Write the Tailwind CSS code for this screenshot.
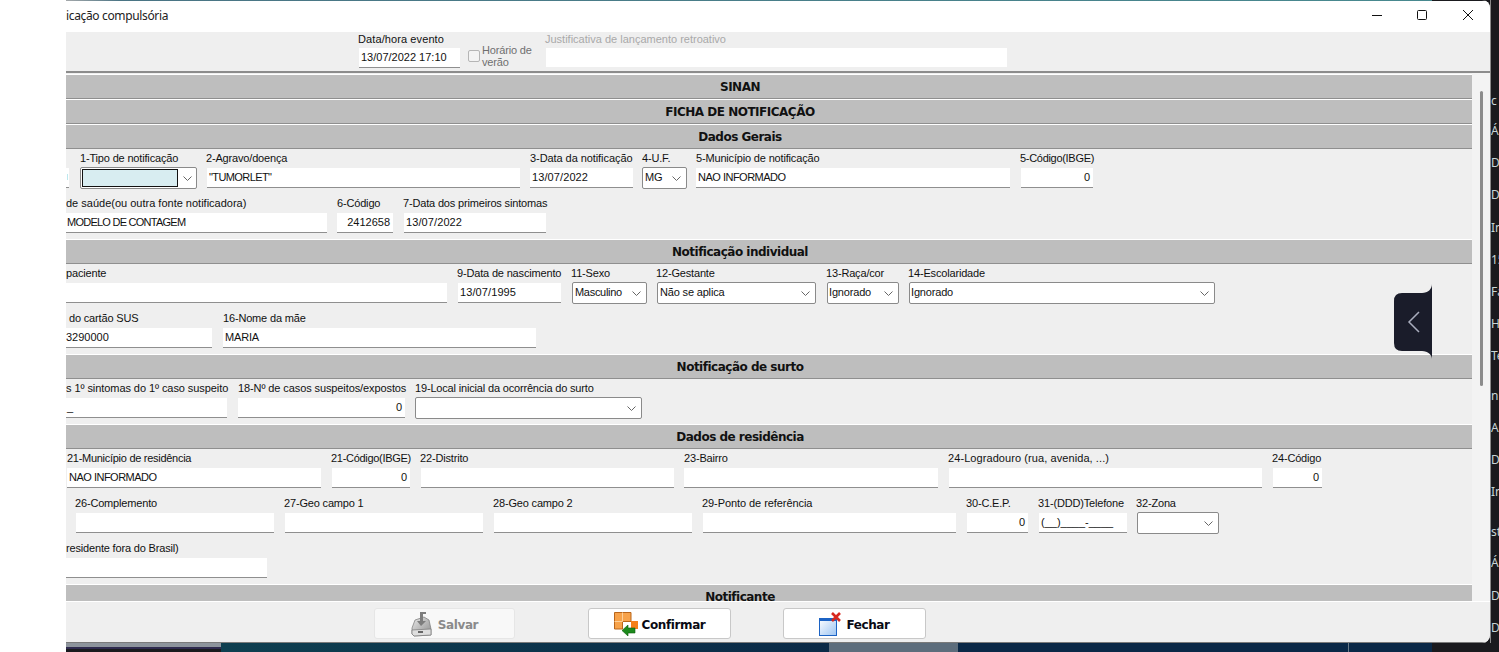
<!DOCTYPE html>
<html lang="pt-BR">
<head>
  <meta charset="UTF-8" />
  <title>Notificação compulsória</title>
  <script src="https://cdn.jsdelivr.net/npm/@tailwindcss/browser@4"></script>
</head>
<body class="bg-white overflow-hidden">

<div class="relative flex w-[1499px] h-[652px] overflow-hidden font-['Liberation_Sans',sans-serif] text-[11px] tracking-[-0.17px] text-[#111]">
  <div class="w-[66px] shrink-0 bg-white"></div>

  <div class="flex-1 flex flex-col bg-[#1a1a1e]">
    <div class="flex h-[643px]">

      <!-- Window -->
      <div class="w-[1424px] h-[643px] flex flex-col bg-[#efefef] rounded-r-[8px] overflow-hidden">
        <!-- Title bar -->
        <div class="h-[1px] flex">
          <div class="w-[1366px] bg-gradient-to-r from-[#a5a9ab] via-[#4a7484] via-[4%] to-[#47898f]"></div>
          <div class="flex-1 bg-[#1a1a1e]"></div>
        </div>
        <div class="h-[31px] bg-white flex items-center justify-between">
          <span class="text-[12px] -mt-[2px] tracking-[-0.35px] font-['Noto_Sans',sans-serif] text-[#222]">icação compulsória</span>
          <div class="flex items-center -mt-[4px] mr-[17px]">
            <svg class="w-[10px] h-[10px]" viewBox="0 0 10 10"><path d="M0 5.5H10" stroke="#111" stroke-width="1"/></svg>
            <svg class="w-[10px] h-[10px] ml-[35px]" viewBox="0 0 10 10"><rect x=".5" y=".5" width="9" height="9" rx="1" fill="none" stroke="#111"/></svg>
            <svg class="w-[10px] h-[10px] ml-[36px]" viewBox="0 0 10 10"><path d="M0 0L10 10M10 0L0 10" stroke="#111" stroke-width="1"/></svg>
          </div>
        </div>

        <!-- Event date panel -->
        <div class="h-[41px] shrink-0 bg-[#efefef] border-b-2 border-b-[#8c8c8c] flex">
          <div class="ml-[292px] w-[102px]">
            <div class="h-[14px] leading-[14px] whitespace-nowrap tracking-[0.1px]">Data/hora evento</div>
            <div class="ml-[1px] mt-[2px] h-[20px] w-[101px] bg-white border-b border-b-[#8f8f8f] pl-[2px] leading-[19px] tracking-[0px]">13/07/2022 17:10</div>
          </div>
          <div class="ml-[8px] mt-[18px] w-[12px] h-[12px] border border-[#b5b5b5] rounded-[2px] bg-[#f3f3f3]"></div>
          <div class="ml-[2px] mt-[12px] w-[58px] leading-[12px] text-[#6f6f6f]">Horário de verão</div>
          <div class="ml-[5px] w-[461px]">
            <div class="h-[14px] leading-[14px] whitespace-nowrap text-[#a9a9a9] tracking-[0px]">Justificativa de lançamento retroativo</div>
            <div class="ml-[1px] mt-[2px] h-[19px] w-[461px] bg-white"></div>
          </div>
        </div>

        <!-- Form body -->
        <div class="flex h-[528px] shrink-0 overflow-hidden">
          <div class="w-[1406px] shrink-0 pt-[1px] overflow-hidden bg-[#efefef]">

            <div class="h-[25px] bg-[#bebebe] border-t border-t-white border-b border-b-[#8f8f8f] -ml-[58px] text-center font-bold text-[12px] leading-[25px] font-['DejaVu_Sans',sans-serif] tracking-[-0.5px]">SINAN</div>
            <div class="h-[25px] bg-[#bebebe] border-t border-t-white border-b border-b-[#8f8f8f] -ml-[58px] text-center font-bold text-[12px] leading-[25px] font-['DejaVu_Sans',sans-serif] tracking-[-0.5px]">FICHA DE NOTIFICAÇÃO</div>
            <div class="h-[25px] bg-[#bebebe] border-t border-t-white border-b border-b-[#8f8f8f] -ml-[58px] text-center font-bold text-[12px] leading-[25px] font-['DejaVu_Sans',sans-serif] tracking-[-0.5px]">Dados Gerais</div>

            <div class="pt-[2px] flex flex-col gap-[8px]">
              <div class="flex h-[37px]">
                <div class="w-[3px] mt-[17px] h-[20px] bg-white border-b border-b-[#8f8f8f] pt-[6px]"><div class="ml-[1px] w-[1px] h-[6px] bg-[#bde8ee]"></div></div>
                <div class="ml-[11px] w-[117px]">
                  <div class="h-[14px] leading-[14px] whitespace-nowrap">1-Tipo de notificação</div>
                  <div class="mt-[2px] h-[22px] bg-white border border-[#8a8a8a] rounded-[2px] flex items-center p-[1px]">
                    <div class="w-[96px] h-[18px] bg-[#d8edf1] border border-[#111]"></div>
                    <svg class="ml-[5px] w-[9px] h-[5px]" viewBox="0 0 9 5"><path d="M.5 .5L4.5 4.5L8.5 .5" fill="none" stroke="#666"/></svg>
                  </div>
                </div>
                <div class="ml-[10px] w-[313px]">
                  <div class="-ml-px h-[14px] leading-[14px] whitespace-nowrap">2-Agravo/doença</div>
                  <div class="mt-[3px] h-[20px] bg-white border-b border-b-[#8f8f8f] pl-[2px] leading-[19px] whitespace-nowrap tracking-[-0.6px]">"TUMORLET"</div>
                </div>
                <div class="ml-[10px] w-[103px]">
                  <div class="h-[14px] leading-[14px] whitespace-nowrap tracking-[-0.07px]">3-Data da notificação</div>
                  <div class="mt-[3px] h-[20px] bg-white border-b border-b-[#8f8f8f] pl-[2px] leading-[19px] whitespace-nowrap tracking-[0.1px]">13/07/2022</div>
                </div>
                <div class="ml-[9px] w-[45px]">
                  <div class="h-[14px] leading-[14px] whitespace-nowrap">4-U.F.</div>
                  <div class="mt-[2px] h-[22px] bg-white border border-[#8a8a8a] rounded-[2px] flex items-center justify-between pl-[2px] pr-[5px]"><span class="-mt-[2px]">MG</span><svg class="w-[9px] h-[5px]" viewBox="0 0 9 5"><path d="M.5 .5L4.5 4.5L8.5 .5" fill="none" stroke="#666"/></svg></div>
                </div>
                <div class="ml-[9px] w-[314px]">
                  <div class="h-[14px] leading-[14px] whitespace-nowrap">5-Município de notificação</div>
                  <div class="mt-[3px] h-[20px] bg-white border-b border-b-[#8f8f8f] pl-[2px] leading-[19px] whitespace-nowrap tracking-[-0.5px]">NAO INFORMADO</div>
                </div>
                <div class="ml-[11px] w-[72px]">
                  <div class="-ml-px h-[14px] leading-[14px] whitespace-nowrap tracking-[-0.3px]">5-Código(IBGE)</div>
                  <div class="mt-[3px] h-[20px] bg-white border-b border-b-[#8f8f8f] pr-[3px] text-right leading-[19px]">0</div>
                </div>
              </div>

              <div class="flex h-[37px]">
                <div class="w-[261px]">
                  <div class="h-[14px] leading-[14px] whitespace-nowrap tracking-[0px]">de saúde(ou outra fonte notificadora)</div>
                  <div class="mt-[3px] h-[20px] bg-white border-b border-b-[#8f8f8f] pl-[1px] leading-[19px] whitespace-nowrap tracking-[-0.75px]">MODELO DE CONTAGEM</div>
                </div>
                <div class="ml-[10px] w-[56px]">
                  <div class="h-[14px] leading-[14px] whitespace-nowrap">6-Código</div>
                  <div class="mt-[3px] h-[20px] bg-white border-b border-b-[#8f8f8f] pr-[3px] text-right leading-[19px] tracking-[0px]">2412658</div>
                </div>
                <div class="ml-[11px] w-[142px]">
                  <div class="-ml-px h-[14px] leading-[14px] whitespace-nowrap">7-Data dos primeiros sintomas</div>
                  <div class="mt-[3px] h-[20px] bg-white border-b border-b-[#8f8f8f] pl-[2px] leading-[19px] tracking-[0.1px]">13/07/2022</div>
                </div>
              </div>
            </div>

            <div class="mt-[6px] h-[25px] bg-[#bebebe] border-t border-t-white border-b border-b-[#8f8f8f] -ml-[58px] text-center font-bold text-[12px] leading-[25px] font-['DejaVu_Sans',sans-serif] tracking-[-0.5px]">Notificação individual</div>

            <div class="pt-[2px] flex flex-col gap-[8px]">
              <div class="flex h-[37px]">
                <div class="w-[381px]">
                  <div class="h-[14px] leading-[14px] whitespace-nowrap">paciente</div>
                  <div class="mt-[3px] h-[20px] bg-white border-b border-b-[#8f8f8f]"></div>
                </div>
                <div class="ml-[11px] w-[103px]">
                  <div class="-ml-px h-[14px] leading-[14px] whitespace-nowrap">9-Data de nascimento</div>
                  <div class="mt-[3px] h-[20px] bg-white border-b border-b-[#8f8f8f] pl-[2px] leading-[19px] tracking-[0.1px]">13/07/1995</div>
                </div>
                <div class="ml-[11px] w-[75px]">
                  <div class="-ml-px h-[14px] leading-[14px] whitespace-nowrap">11-Sexo</div>
                  <div class="mt-[2px] h-[22px] bg-white border border-[#8a8a8a] rounded-[2px] flex items-center justify-between pl-[2px] pr-[5px]"><span class="-mt-[2px] tracking-[-0.3px]">Masculino</span><svg class="w-[9px] h-[5px]" viewBox="0 0 9 5"><path d="M.5 .5L4.5 4.5L8.5 .5" fill="none" stroke="#666"/></svg></div>
                </div>
                <div class="ml-[10px] w-[159px]">
                  <div class="-ml-px h-[14px] leading-[14px] whitespace-nowrap">12-Gestante</div>
                  <div class="mt-[2px] h-[22px] bg-white border border-[#8a8a8a] rounded-[2px] flex items-center justify-between pl-[2px] pr-[5px]"><span class="-mt-[2px]">Não se aplica</span><svg class="w-[9px] h-[5px]" viewBox="0 0 9 5"><path d="M.5 .5L4.5 4.5L8.5 .5" fill="none" stroke="#666"/></svg></div>
                </div>
                <div class="ml-[11px] w-[72px]">
                  <div class="-ml-px h-[14px] leading-[14px] whitespace-nowrap">13-Raça/cor</div>
                  <div class="mt-[2px] h-[22px] bg-white border border-[#8a8a8a] rounded-[2px] flex items-center justify-between pl-[1px] pr-[5px]"><span class="-mt-[2px]">Ignorado</span><svg class="w-[9px] h-[5px]" viewBox="0 0 9 5"><path d="M.5 .5L4.5 4.5L8.5 .5" fill="none" stroke="#666"/></svg></div>
                </div>
                <div class="ml-[10px] w-[306px]">
                  <div class="-ml-px h-[14px] leading-[14px] whitespace-nowrap">14-Escolaridade</div>
                  <div class="mt-[2px] h-[22px] bg-white border border-[#8a8a8a] rounded-[2px] flex items-center justify-between pl-[1px] pr-[5px]"><span class="-mt-[2px]">Ignorado</span><svg class="w-[9px] h-[5px]" viewBox="0 0 9 5"><path d="M.5 .5L4.5 4.5L8.5 .5" fill="none" stroke="#666"/></svg></div>
                </div>
              </div>

              <div class="flex h-[37px]">
                <div class="w-[146px]">
                  <div class="pl-[3px] h-[14px] leading-[14px] whitespace-nowrap">do cartão SUS</div>
                  <div class="mt-[3px] h-[20px] bg-white border-b border-b-[#8f8f8f] leading-[19px] tracking-[0px]">3290000</div>
                </div>
                <div class="ml-[11px] w-[313px]">
                  <div class="h-[14px] leading-[14px] whitespace-nowrap">16-Nome da mãe</div>
                  <div class="mt-[3px] h-[20px] bg-white border-b border-b-[#8f8f8f] pl-[2px] leading-[19px]">MARIA</div>
                </div>
              </div>
            </div>

            <div class="mt-[6px] h-[25px] bg-[#bebebe] border-t border-t-white border-b border-b-[#8f8f8f] -ml-[58px] text-center font-bold text-[12px] leading-[25px] font-['DejaVu_Sans',sans-serif] tracking-[-0.5px]">Notificação de surto</div>

            <div class="pt-[2px]">
              <div class="flex h-[37px]">
                <div class="w-[161px]">
                  <div class="h-[14px] leading-[14px] whitespace-nowrap tracking-[-0.07px]">s 1º sintomas do 1º caso suspeito</div>
                  <div class="mt-[3px] h-[20px] bg-white border-b border-b-[#8f8f8f] pl-[1px] leading-[19px]">_</div>
                </div>
                <div class="ml-[11px] w-[167px]">
                  <div class="h-[14px] leading-[14px] whitespace-nowrap tracking-[-0.1px]">18-Nº de casos suspeitos/expostos</div>
                  <div class="mt-[3px] h-[20px] bg-white border-b border-b-[#8f8f8f] pr-[3px] text-right leading-[19px]">0</div>
                </div>
                <div class="ml-[10px] w-[227px]">
                  <div class="h-[14px] leading-[14px] whitespace-nowrap">19-Local inicial da ocorrência do surto</div>
                  <div class="mt-[2px] h-[22px] bg-white border border-[#8a8a8a] rounded-[2px] flex items-center justify-end pr-[5px]"><svg class="w-[9px] h-[5px]" viewBox="0 0 9 5"><path d="M.5 .5L4.5 4.5L8.5 .5" fill="none" stroke="#666"/></svg></div>
                </div>
              </div>
            </div>

            <div class="mt-[6px] h-[25px] bg-[#bebebe] border-t border-t-white border-b border-b-[#8f8f8f] -ml-[58px] text-center font-bold text-[12px] leading-[25px] font-['DejaVu_Sans',sans-serif] tracking-[-0.5px]">Dados de residência</div>

            <div class="pt-[2px] flex flex-col gap-[8px]">
              <div class="flex h-[37px]">
                <div class="ml-[1px] w-[254px]">
                  <div class="h-[14px] leading-[14px] whitespace-nowrap tracking-[-0.28px]">21-Município de residência</div>
                  <div class="mt-[3px] h-[20px] bg-white border-b border-b-[#8f8f8f] pl-[2px] leading-[19px] tracking-[-0.5px]">NAO INFORMADO</div>
                </div>
                <div class="ml-[11px] w-[78px]">
                  <div class="-ml-px h-[14px] leading-[14px] whitespace-nowrap tracking-[-0.3px]">21-Código(IBGE)</div>
                  <div class="mt-[3px] h-[20px] bg-white border-b border-b-[#8f8f8f] pr-[3px] text-right leading-[19px]">0</div>
                </div>
                <div class="ml-[11px] w-[253px]">
                  <div class="-ml-px h-[14px] leading-[14px] whitespace-nowrap">22-Distrito</div>
                  <div class="mt-[3px] h-[20px] bg-white border-b border-b-[#8f8f8f]"></div>
                </div>
                <div class="ml-[10px] w-[254px]">
                  <div class="h-[14px] leading-[14px] whitespace-nowrap">23-Bairro</div>
                  <div class="mt-[3px] h-[20px] bg-white border-b border-b-[#8f8f8f]"></div>
                </div>
                <div class="ml-[11px] w-[313px]">
                  <div class="-ml-px h-[14px] leading-[14px] whitespace-nowrap tracking-[0.08px]">24-Logradouro (rua, avenida, ...)</div>
                  <div class="mt-[3px] h-[20px] bg-white border-b border-b-[#8f8f8f]"></div>
                </div>
                <div class="ml-[11px] w-[49px]">
                  <div class="-ml-px h-[14px] leading-[14px] whitespace-nowrap">24-Código</div>
                  <div class="mt-[3px] h-[20px] bg-white border-b border-b-[#8f8f8f] pr-[3px] text-right leading-[19px]">0</div>
                </div>
              </div>

              <div class="flex h-[37px]">
                <div class="ml-[10px] w-[198px]">
                  <div class="-ml-px h-[14px] leading-[14px] whitespace-nowrap">26-Complemento</div>
                  <div class="mt-[3px] h-[20px] bg-white border-b border-b-[#8f8f8f]"></div>
                </div>
                <div class="ml-[11px] w-[198px]">
                  <div class="-ml-px h-[14px] leading-[14px] whitespace-nowrap">27-Geo campo 1</div>
                  <div class="mt-[3px] h-[20px] bg-white border-b border-b-[#8f8f8f]"></div>
                </div>
                <div class="ml-[11px] w-[198px]">
                  <div class="-ml-px h-[14px] leading-[14px] whitespace-nowrap">28-Geo campo 2</div>
                  <div class="mt-[3px] h-[20px] bg-white border-b border-b-[#8f8f8f]"></div>
                </div>
                <div class="ml-[11px] w-[253px]">
                  <div class="-ml-px h-[14px] leading-[14px] whitespace-nowrap tracking-[-0.07px]">29-Ponto de referência</div>
                  <div class="mt-[3px] h-[20px] bg-white border-b border-b-[#8f8f8f]"></div>
                </div>
                <div class="ml-[11px] w-[61px]">
                  <div class="-ml-px h-[14px] leading-[14px] whitespace-nowrap">30-C.E.P.</div>
                  <div class="mt-[3px] h-[20px] bg-white border-b border-b-[#8f8f8f] pr-[3px] text-right leading-[19px]">0</div>
                </div>
                <div class="ml-[11px] w-[88px]">
                  <div class="-ml-px h-[14px] leading-[14px] whitespace-nowrap">31-(DDD)Telefone</div>
                  <div class="mt-[3px] h-[20px] bg-white border-b border-b-[#8f8f8f] pl-[2px] leading-[19px] whitespace-nowrap tracking-[0px]">(__)____-____</div>
                </div>
                <div class="ml-[10px] w-[82px]">
                  <div class="-ml-px h-[14px] leading-[14px] whitespace-nowrap">32-Zona</div>
                  <div class="mt-[2px] h-[22px] bg-white border border-[#8a8a8a] rounded-[2px] flex items-center justify-end pr-[5px]"><svg class="w-[9px] h-[5px]" viewBox="0 0 9 5"><path d="M.5 .5L4.5 4.5L8.5 .5" fill="none" stroke="#666"/></svg></div>
                </div>
              </div>

              <div class="flex h-[37px]">
                <div class="w-[201px]">
                  <div class="h-[14px] leading-[14px] whitespace-nowrap">residente fora do Brasil)</div>
                  <div class="mt-[3px] h-[20px] bg-white border-b border-b-[#8f8f8f]"></div>
                </div>
              </div>
            </div>

            <div class="mt-[6px] h-[25px] bg-[#bebebe] border-t border-t-white border-b border-b-[#8f8f8f] -ml-[58px] text-center font-bold text-[12px] leading-[25px] font-['DejaVu_Sans',sans-serif] tracking-[-0.5px]">Notificante</div>
          </div>

          <!-- Scrollbar -->
          <div class="w-[18px] bg-[#f3f3f3]">
            <div class="ml-[8px] mt-[18px] w-[3px] h-[295px] bg-[#8c8c8c] rounded-full"></div>
          </div>
        </div>

        <!-- Footer buttons -->
        <div class="h-[42px] shrink-0 bg-[#efefef] border-t border-t-white border-b border-b-[#7a7a7a] flex pt-[6px] pl-[308px] font-['DejaVu_Sans',sans-serif] font-bold text-[12px] tracking-[-0.4px]">
          <button class="w-[141px] h-[31px] bg-[#f8f8f8] border border-[#e6e6e6] rounded-[3px] flex items-center justify-center gap-[6px] text-[#8a8a8a]">
            <svg class="w-[21px] h-[26px]" viewBox="0 0 21 26">
              <defs><linearGradient id="sv" x1="0" y1="0" x2="1" y2="1"><stop offset="0" stop-color="#e8e8e8"/><stop offset="1" stop-color="#8c8c8c"/></linearGradient></defs>
              <path d="M1 17L4 9L13 6L18 9L20 18L20 24L3 25L1 23Z" fill="url(#sv)" stroke="#777" stroke-width=".7"/>
              <path d="M1 19L20 18V24L3 25L1 23Z" fill="#dedede" stroke="#777" stroke-width=".7"/>
              <path d="M9 1H15V3H12V10H15L10 15L6 10H9Z" fill="#7d7d7d"/>
              <rect x="7" y="20" width="5" height="2" fill="#666"/>
            </svg>
            <span class="mt-[2px]">Salvar</span>
          </button>
          <button class="ml-[73px] w-[143px] h-[31px] bg-white border border-[#c8c8c8] rounded-[3px] flex items-center justify-center gap-[4px] text-[#0a0a14]">
            <svg class="w-[24px] h-[24px]" viewBox="0 0 24 24">
              <path d="M.5 .5H17V9.5H8.5V17H.5Z" fill="#f7a24a" stroke="#b9661b"/>
              <path d="M8.5 .5V9.5M.5 9.5H8.5" stroke="#fcd09a"/>
              <rect x="17" y="9" width="7" height="8" fill="#f57f17"/>
              <path d="M8 18.5L14 13V16H21V21H14V24Z" fill="#1d8a1d" stroke="#0c5c0c" stroke-width=".6"/>
            </svg>
            <span class="mt-[2px]">Confirmar</span>
          </button>
          <button class="ml-[52px] w-[143px] h-[31px] bg-white border border-[#c8c8c8] rounded-[3px] flex items-center justify-center gap-[5px] text-[#0a0a14]">
            <svg class="w-[22px] h-[24px]" viewBox="0 0 22 24">
              <defs><linearGradient id="fc" x1="0" y1="0" x2="1" y2="1"><stop offset="0" stop-color="#ffffff"/><stop offset="1" stop-color="#9cc4f2"/></linearGradient></defs>
              <rect x=".5" y="6.5" width="17" height="17" fill="url(#fc)" stroke="#1c63c4"/>
              <rect x="0" y="6" width="18" height="3" fill="#1c63c4"/>
              <path d="M13 1L21 9M21 1L13 9" stroke="#d8281e" stroke-width="2.6"/>
            </svg>
            <span class="mt-[2px]">Fechar</span>
          </button>
        </div>
      </div>

      <!-- App behind the window, right edge -->
      <div class="w-[9px] h-[643px] border-l border-l-[#8a8a8a] overflow-hidden pt-[94px] text-[12px] leading-[14px] tracking-[0px] text-[#c9d6d6] font-['Noto_Sans',sans-serif] whitespace-nowrap">
        <div class="h-[30px]">c</div>
        <div class="h-[32px]">Á</div>
        <div class="h-[32px]">D</div>
        <div class="h-[33px]">D</div>
        <div class="h-[32px]">In</div>
        <div class="h-[32px]">15</div>
        <div class="h-[32px]">Fa</div>
        <div class="h-[32px]">H</div>
        <div class="h-[40px]">Te</div>
        <div class="h-[32px]">n</div>
        <div class="h-[32px]">A</div>
        <div class="h-[32px]">D</div>
        <div class="h-[40px]">In</div>
        <div class="h-[31px]">st</div>
        <div class="h-[33px]">Á</div>
        <div class="h-[32px]">D</div>
        <div class="h-[14px]">D</div>
      </div>
    </div>

    <!-- Taskbar behind -->
    <div class="h-[9px] flex">
      <div class="w-[155px] h-[6px] bg-[#8d949c] border-b-2 border-b-[#2e2a4e]"></div>
      <div class="w-[608px] bg-gradient-to-r from-[#0e3f50] to-[#0b2a47]"></div>
      <div class="w-[129px] bg-[#5d6d7c]"></div>
      <div class="w-[390px] bg-[#0a2847]"></div>
      <div class="w-[84px] bg-[#0a2847] border-l border-l-[#6a7a88]"></div>
    </div>
  </div>

  <!-- Collapsed side tab, floats over the window -->
  <svg class="absolute left-[1394px] top-[284px] w-[38px] h-[75px]" viewBox="0 0 38 75">
    <path d="M38 0C38 5 34 9 28 9H8Q0 9 0 17V59Q0 67 8 67H28C34 67 38 71 38 75Z" fill="#1a1c2a"/>
    <path d="M25 28L15 38L25 48" fill="none" stroke="#a9adbd" stroke-width="1.5"/>
  </svg>
</div>

</body>
</html>
